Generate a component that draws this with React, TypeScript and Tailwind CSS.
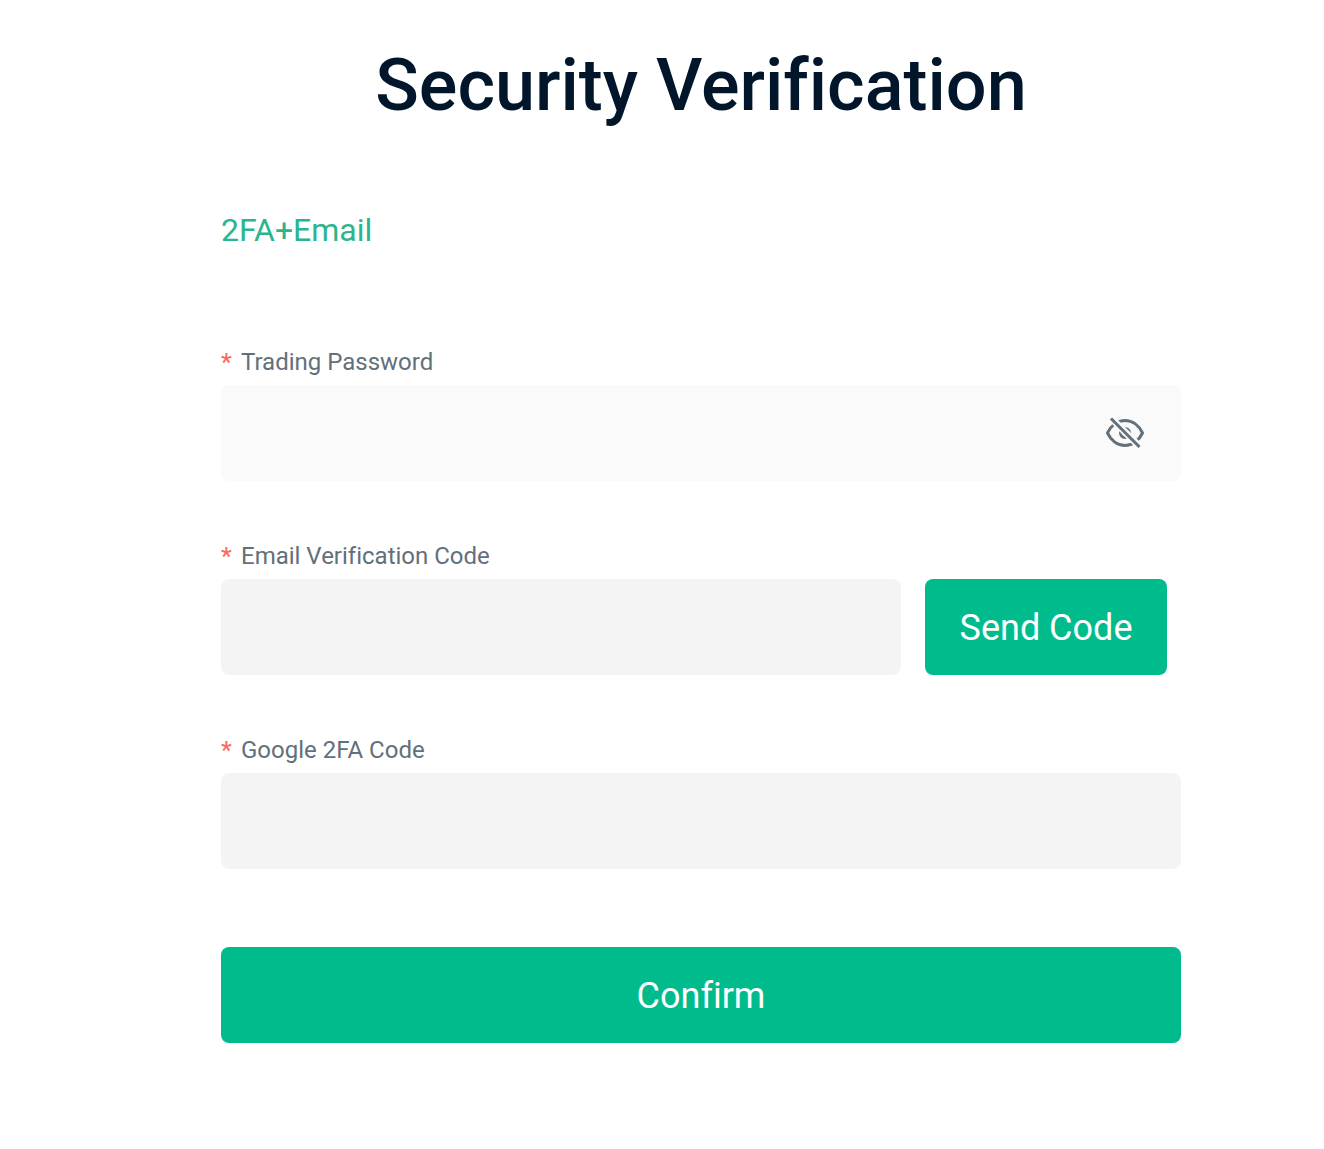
import { useState, type InputHTMLAttributes } from "react";

function Label({ id, text }: { id: string; text: string }) {
  return (
    <label htmlFor={id} className="flex h-8 items-center gap-2 text-2xl leading-8 text-[#62707b]">
      <span className="w-3 font-medium text-[#fa6a62]">*</span>
      <span>{text}</span>
    </label>
  );
}

function Field(props: InputHTMLAttributes<HTMLInputElement>) {
  return <input {...props} className={"h-24 w-full min-w-0 rounded-lg px-8 text-3xl outline-none " + (props.className ?? "")} />;
}

function EyeOff() {
  return (
    <svg viewBox="0 0 40 40" className="size-10" fill="none" stroke="currentColor">
      <path
        d="M2.500 20C6 12.500 12.500 7.500 20 7.500S34 12.500 37.500 20C34 27.500 27.500 32.500 20 32.500S6 27.500 2.500 20Z"
        strokeWidth="3"
        strokeLinejoin="round"
      />
      <circle cx="20" cy="20" r="4.500" strokeWidth="3" />
      <path d="M4 3l33 33" stroke="#fafafa" strokeWidth="7" />
      <path d="M6 5.500l28.500 28.500" strokeWidth="3" />
    </svg>
  );
}

export default function App() {
  const [visible, setVisible] = useState(false);
  return (
    <main className="min-h-screen bg-white pt-[42px] pr-[143px] pl-[221px] font-['Roboto',sans-serif] [font-variant-ligatures:none]">
      <h1 className="text-center text-7xl leading-[88px] font-medium text-[#01152b]">Security Verification</h1>
      <p className="mt-20 text-[32px] leading-10 text-[#2bb58f]">2FA+Email</p>
      <form className="mt-24" onSubmit={(e) => e.preventDefault()}>
        <Label id="password" text="Trading Password" />
        <div className="relative mt-[7px]">
          <Field id="password" type={visible ? "text" : "password"} className="bg-[#fafafa] pr-24" />
          <button
            type="button"
            aria-label="Toggle password visibility"
            onClick={() => setVisible(!visible)}
            className="absolute top-7 right-9 text-[#62707b]"
          >
            <EyeOff />
          </button>
        </div>
        <div className="mt-[59px]">
          <Label id="email-code" text="Email Verification Code" />
          <div className="mt-[7px] flex gap-6 pr-3.5">
            <Field id="email-code" className="flex-1 bg-[#f4f4f4]" />
            <button type="button" className="h-24 w-[242px] rounded-lg bg-[#00bc8d] pt-0.5 text-4xl text-white">Send Code</button>
          </div>
        </div>
        <div className="mt-[59px]">
          <Label id="google-code" text="Google 2FA Code" />
          <Field id="google-code" className="mt-[7px] bg-[#f4f4f4]" />
        </div>
        <button type="submit" className="mt-[78px] h-24 w-full rounded-lg bg-[#00bc8d] pt-0.5 text-4xl text-white">Confirm</button>
      </form>
    </main>
  );
}
